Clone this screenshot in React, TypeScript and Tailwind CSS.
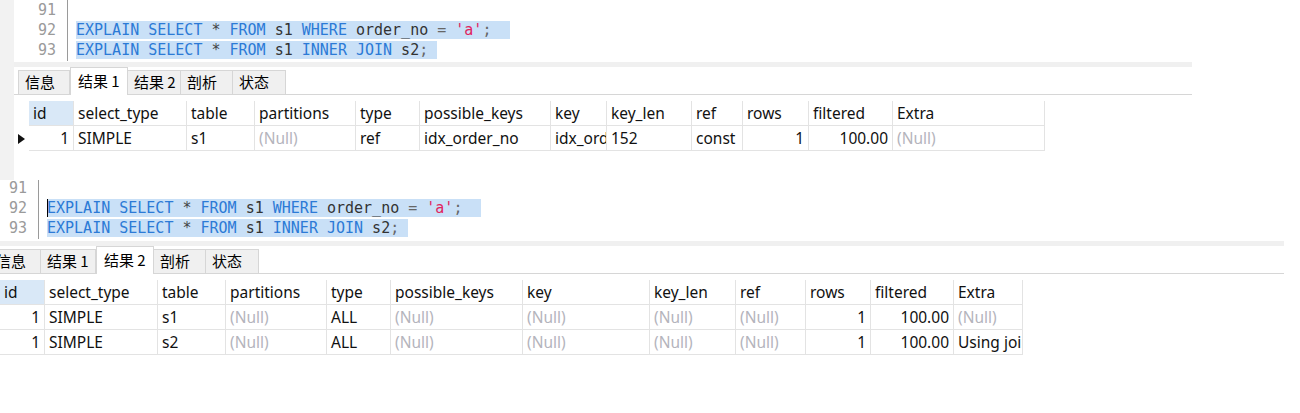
import React from 'react';

type Col = { label: string; w: number; align?: 'right' };
type Cell = string | null;

const KW = 'text-[#2c7ad6]';
const mono = { fontFamily: '"DejaVu Sans Mono", "Liberation Mono", monospace' };
const ui = { fontFamily: '"Noto Sans", "Open Sans", "Noto Sans CJK SC", sans-serif' };
const cjk = { fontFamily: '"Noto Sans CJK SC", "Noto Sans", sans-serif' };

function CodeLines({ cursor }: { cursor?: boolean }) {
  return (
    <div className="flex flex-col pl-[8px] text-[15px] leading-[20px] whitespace-pre" style={mono}>
      <div className="h-[20px]"> </div>
      <div className="relative h-[20px]">
        {cursor && <span className="absolute left-0 top-[1px] h-[18px] w-px bg-black" />}
        <span className="bg-[#c9e0f7]">
          <span className={KW}>EXPLAIN SELECT</span>
          <span className="text-[#444]"> * </span>
          <span className={KW}>FROM</span>
          <span className="text-[#333]"> s1 </span>
          <span className={KW}>WHERE</span>
          <span className="text-[#333]"> order_no </span>
          <span className="text-[#666]">= </span>
          <span className="text-[#e0245e]">'a'</span>
          <span className="text-[#666]">;  </span>
        </span>
      </div>
      <div className="h-[20px]">
        <span className="bg-[#c9e0f7]">
          <span className={KW}>EXPLAIN SELECT</span>
          <span className="text-[#444]"> * </span>
          <span className={KW}>FROM</span>
          <span className="text-[#333]"> s1 </span>
          <span className={KW}>INNER JOIN</span>
          <span className="text-[#333]"> s2</span>
          <span className="text-[#666]">; </span>
        </span>
      </div>
    </div>
  );
}

const tabs = [
  { label: '信息', w: 52 },
  { label: '结果 1', w: 55 },
  { label: '结果 2', w: 53 },
  { label: '剖析', w: 52 },
  { label: '状态', w: 53 },
];

function TabBar({ active }: { active: number }) {
  return (
    <div className="flex h-[28px] items-end border-b border-[#d6d6d6] pl-[4px]" style={cjk}>
      {tabs.map((t, i) =>
        i === active ? (
          <div
            key={t.label}
            className="relative -mb-px flex h-[28px] w-[58px] items-center border-x border-t border-[#d6d6d6] bg-white pl-[7px] text-[15px] text-black"
          >
            {t.label}
          </div>
        ) : (
          <div
            key={t.label}
            className="flex h-[24px] items-center border-r border-t border-[#d6d6d6] bg-[#f0f0f0] pl-[6px] text-[15px] text-black first:border-l"
            style={{ width: t.w }}
          >
            {t.label}
          </div>
        )
      )}
    </div>
  );
}

function Grid({ cols, rows, indicator }: { cols: Col[]; rows: Cell[][]; indicator: boolean }) {
  return (
    <div className="flex flex-col text-[15.5px] text-[#111]" style={ui}>
      <div className="flex h-[25px]">
        <div className="w-[15px] shrink-0" />
        {cols.map((c, i) => (
          <div
            key={c.label}
            className={
              'flex shrink-0 items-center overflow-hidden whitespace-nowrap border-b border-r border-[#e3e3e3] px-[4px] pt-[2px] ' +
              (i === 0 ? 'bg-[#d9e8f7]' : 'bg-white')
            }
            style={{ width: c.w }}
          >
            {c.label}
          </div>
        ))}
      </div>
      {rows.map((r, ri) => (
        <div key={ri} className="flex h-[25px]">
          <div className="flex w-[15px] shrink-0 items-center justify-center">
            {indicator && ri === 0 && (
              <svg width="7" height="10" viewBox="0 0 7 10">
                <path d="M0 0 L7 5 L0 10 Z" fill="#111" />
              </svg>
            )}
          </div>
          {cols.map((c, ci) => {
            const v = r[ci];
            return (
              <div
                key={ci}
                className={
                  'flex shrink-0 items-center overflow-hidden whitespace-nowrap border-b border-r border-[#e3e3e3] px-[4px] pt-[2px] ' +
                  (c.align === 'right' ? 'justify-end ' : '') +
                  (v === null ? 'text-[#b4b4bc]' : '')
                }
                style={{ width: c.w }}
              >
                {v === null ? '(Null)' : v}
              </div>
            );
          })}
        </div>
      ))}
    </div>
  );
}

function Panel({
  width,
  editorH,
  active,
  cols,
  rows,
  indicator,
  cursor,
}: {
  width: number;
  editorH: number;
  active: number;
  cols: Col[];
  rows: Cell[][];
  indicator: boolean;
  cursor?: boolean;
}) {
  return (
    <div className="flex flex-col bg-white" style={{ width }}>
      <div className="flex" style={{ height: editorH }}>
        <div
          className="flex h-[61px] w-[54px] flex-col items-end border-r border-[#9a9a9a] pr-[11px] text-[15px] leading-[20px] text-[#9a9a9a]"
          style={mono}
        >
          <div>91</div>
          <div>92</div>
          <div>93</div>
        </div>
        <CodeLines cursor={cursor} />
      </div>
      <div className="h-[5px] bg-[#f0f0f0]" />
      <TabBar active={active} />
      <div className="h-[6px]" />
      <Grid cols={cols} rows={rows} indicator={indicator} />
    </div>
  );
}

const cols1: Col[] = [
  { label: 'id', w: 45, align: 'right' },
  { label: 'select_type', w: 113 },
  { label: 'table', w: 68 },
  { label: 'partitions', w: 101 },
  { label: 'type', w: 64 },
  { label: 'possible_keys', w: 131 },
  { label: 'key', w: 56 },
  { label: 'key_len', w: 85 },
  { label: 'ref', w: 51 },
  { label: 'rows', w: 66, align: 'right' },
  { label: 'filtered', w: 84, align: 'right' },
  { label: 'Extra', w: 152 },
];

const rows1: Cell[][] = [
  ['1', 'SIMPLE', 's1', null, 'ref', 'idx_order_no', 'idx_order_no', '152', 'const', '1', '100.00', null],
];

const cols2: Col[] = [
  { label: 'id', w: 45, align: 'right' },
  { label: 'select_type', w: 113 },
  { label: 'table', w: 68 },
  { label: 'partitions', w: 101 },
  { label: 'type', w: 64 },
  { label: 'possible_keys', w: 132 },
  { label: 'key', w: 127 },
  { label: 'key_len', w: 86 },
  { label: 'ref', w: 70 },
  { label: 'rows', w: 65, align: 'right' },
  { label: 'filtered', w: 83, align: 'right' },
  { label: 'Extra', w: 69 },
];

const rows2: Cell[][] = [
  ['1', 'SIMPLE', 's1', null, 'ALL', null, null, null, null, '1', '100.00', null],
  ['1', 'SIMPLE', 's2', null, 'ALL', null, null, null, null, '1', '100.00', 'Using join buffer (Block Nested Loop)'],
];

export default function App() {
  return (
    <div className="h-[413px] w-[1300px] overflow-hidden bg-white">
      <div className="flex h-[180px] overflow-hidden">
        <div className="w-[14px] shrink-0 bg-[#f2f2f2]" />
        <Panel width={1178} editorH={62} active={1} cols={cols1} rows={rows1} indicator />
      </div>
      <div className="h-[233px] overflow-hidden">
        <div className="-ml-[15px] -mt-[2px]">
          <Panel width={1299} editorH={63} active={2} cols={cols2} rows={rows2} indicator={false} cursor />
        </div>
      </div>
    </div>
  );
}
